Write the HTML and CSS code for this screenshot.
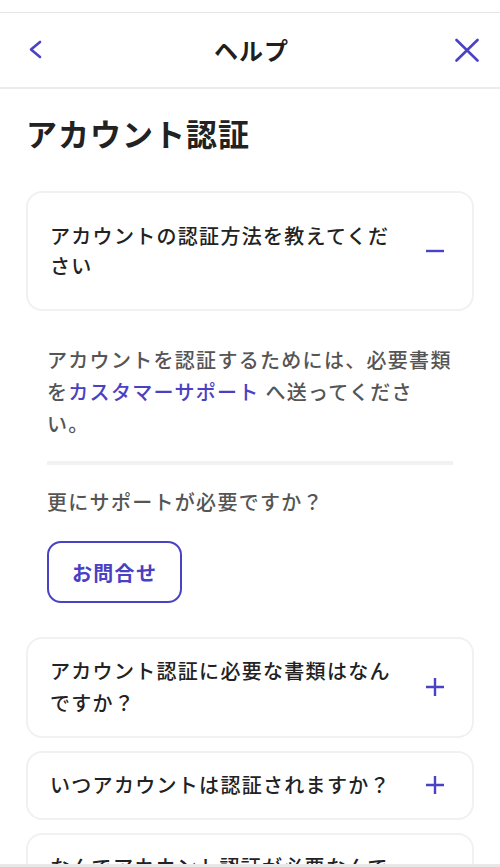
FILE: index.html
```html
<!DOCTYPE html>
<html lang="ja">
<head>
<meta charset="utf-8">
<title>ヘルプ</title>
<link rel="stylesheet" href="styles.css">
</head>
<body>
<div class="topgap"></div>
<header class="header">
  <button class="icon-btn back" aria-label="戻る">
    <svg width="24" height="24" viewBox="0 0 24 24"><polyline points="16,4 7,11.5 16,19" fill="none" stroke="#4a42c4" stroke-width="2.6" stroke-linecap="round" stroke-linejoin="round"/></svg>
  </button>
  <h1 class="title">ヘルプ</h1>
  <button class="icon-btn close" aria-label="閉じる">
    <svg width="24" height="24" viewBox="0 0 24 24"><path d="M1.5 2 L22.5 22.5 M22.5 2 L1.5 22.5" fill="none" stroke="#4a42c4" stroke-width="2.6" stroke-linecap="round"/></svg>
  </button>
</header>
<main class="main">
  <h2 class="heading">アカウント認証</h2>

  <div class="card card-open">
    <p class="q">アカウントの認証方法を教えてください</p>
    <span class="toggle"><svg width="18" height="18" viewBox="0 0 18 18"><path d="M0 9 H18" stroke="#4a42c4" stroke-width="2.4"/></svg></span>
  </div>

  <div class="answer">
    <p class="answer-text">アカウントを認証するためには、必要書類<br>を<a class="link" href="#">カスタマーサポート</a> へ送ってくださ<br>い。</p>
    <hr class="divider">
    <p class="more">更にサポートが必要ですか？</p>
    <button class="contact">お問合せ</button>
  </div>

  <div class="card">
    <p class="q">アカウント認証に必要な書類はなんですか？</p>
    <span class="toggle"><svg width="18" height="18" viewBox="0 0 18 18"><path d="M0 9 H18 M9 0 V18" stroke="#4a42c4" stroke-width="2.4"/></svg></span>
  </div>

  <div class="card">
    <p class="q">いつアカウントは認証されますか？</p>
    <span class="toggle"><svg width="18" height="18" viewBox="0 0 18 18"><path d="M0 9 H18 M9 0 V18" stroke="#4a42c4" stroke-width="2.4"/></svg></span>
  </div>

  <div class="card">
    <p class="q">なんでアカウント認証が必要なんですか？</p>
    <span class="toggle"><svg width="18" height="18" viewBox="0 0 18 18"><path d="M0 9 H18 M9 0 V18" stroke="#4a42c4" stroke-width="2.4"/></svg></span>
  </div>
</main>
<div class="bottom-edge"></div>
</body>
</html>
```

FILE: styles.css
```css
* { box-sizing: border-box; }
html, body { margin: 0; padding: 0; background: #fff; }
body {
  font-family: "Noto Sans CJK JP", "Noto Sans", sans-serif;
  color: #222;
}
.topgap { height: 13px; border-bottom: 1px solid #e6e6e6; }
.header {
  height: 76px;
  border-bottom: 2px solid #ebebeb;
  display: grid;
  grid-template-columns: 1fr auto 1fr;
  align-items: center;
  padding: 0 21px 0 24px;
}
.icon-btn {
  border: 0; background: none; padding: 0; margin: 0;
  width: 24px; height: 24px; display: block; cursor: pointer;
}
.icon-btn svg { display: block; }
.back { justify-self: start; }
.close { justify-self: end; }
.title {
  margin: 0;
  font-size: 24px;
  font-weight: 700;
  line-height: 30px;
  letter-spacing: 1px;
  color: #1f1f1f;
}
.main { padding: 0 26px; }
.heading {
  margin: 24px 0 38px;
  font-size: 31px;
  line-height: 40px;
  font-weight: 700;
  letter-spacing: 1px;
  color: #222;
}
.card {
  border: 2px solid #f1f1f1;
  border-radius: 16px;
  padding: 16px 28px 17px 22px;
  display: flex;
  align-items: center;
  gap: 24px;
  margin-bottom: 13px;
}
.card-open { padding-top: 28px; padding-bottom: 28px; margin-bottom: 0; }
.card-open .q { line-height: 30px; }
.q {
  margin: 0;
  flex: 1;
  font-size: 20px;
  line-height: 32px;
  font-weight: 500;
  letter-spacing: 1.3px;
  color: #222;
}
.toggle { width: 18px; height: 18px; flex: none; }
.toggle svg { display: block; }
.answer { padding: 33px 21px 34px; }
.answer-text {
  margin: 0;
  font-size: 20px;
  line-height: 32px;
  font-weight: 500;
  letter-spacing: 1.3px;
  color: #555;
  white-space: nowrap;
}
.link { color: #4a40c4; text-decoration: none; }
.divider {
  border: 0;
  height: 4px;
  background: #f2f2f2;
  margin: 21px 0 0;
}
.more {
  margin: 21px 0 23px;
  font-size: 20px;
  line-height: 32px;
  font-weight: 500;
  letter-spacing: 1.3px;
  color: #555;
}
.contact {
  display: block;
  height: 62px;
  padding: 0 23px;
  border: 2px solid #4a42c4;
  border-radius: 14px;
  background: #fff;
  color: #4a40c4;
  font-family: inherit;
  font-size: 20px;
  font-weight: 700;
  letter-spacing: 1.3px;
}
.bottom-edge {
  position: fixed;
  left: 0; right: 0; bottom: 0;
  height: 3px;
  background: #e8e8e8;
}
```
